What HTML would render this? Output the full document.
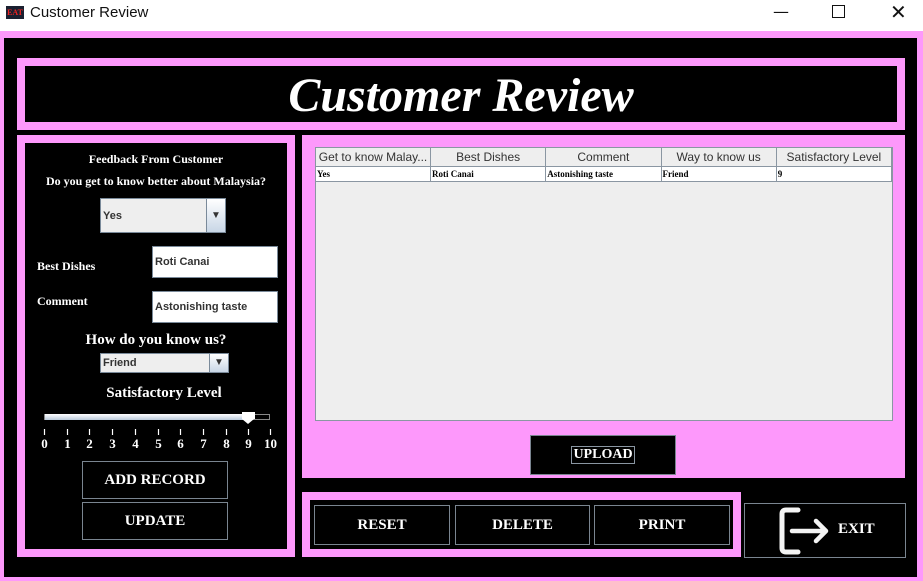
<!DOCTYPE html><html><head><style>
body{margin:0;width:923px;height:581px;position:relative;overflow:hidden;background:#000;font-family:"Liberation Serif",serif}
.a{position:absolute;box-sizing:border-box}
.pk{background:#fd98fb}
.bk{background:#000}
.t{color:#fff;font-weight:bold;font-size:12px;text-align:center}
.btn{border:1px solid #7a8590;color:#fff;font-weight:bold;font-size:15px;display:flex;align-items:center;justify-content:center;background:#000}
.fld{background:#fff;border:1px solid #7a8a9a;font-family:"Liberation Sans",sans-serif;font-weight:bold;font-size:11px;color:#333;padding-left:2px;display:flex;align-items:center}
th,td{border:1px solid #8a96a2;padding:0}
th{font-family:"Liberation Sans",sans-serif;font-weight:normal;font-size:12px;color:#333;background:#eee;height:18px}
td{font-size:9px;font-weight:bold;height:14px;background:#fff;padding-left:1px}
</style></head><body>
<div class="a" style="left:0;top:0;width:923px;height:31px;background:#fff"></div>
<div class="a" style="left:6px;top:6px;width:18px;height:13px;background:#1a2030;color:#e22;font-size:8px;font-weight:bold;line-height:13px;text-align:center">EAT</div>
<div class="a" style="left:30px;top:4px;font-family:'Liberation Sans',sans-serif;font-size:15px;color:#111">Customer Review</div>
<div class="a" style="left:773px;top:2px;font-family:'DejaVu Sans';font-size:16px;color:#111">—</div>
<div class="a" style="left:832px;top:5px;width:13px;height:13px;border:1.5px solid #111"></div>
<div class="a" style="left:890px;top:0px;font-family:'DejaVu Sans';font-size:20px;color:#111">✕</div>
<div class="a pk" style="left:0;top:31px;width:923px;height:550px"></div>
<div class="a bk" style="left:4px;top:38px;width:913px;height:539px"></div>
<div class="a pk" style="left:17px;top:58px;width:888px;height:72px"></div>
<div class="a bk" style="left:25px;top:66px;width:872px;height:56px;color:#fff;font-style:italic;font-weight:bold;font-size:48px;text-align:center;line-height:60px">Customer Review</div>
<div class="a pk" style="left:17px;top:135px;width:278px;height:422px"></div>
<div class="a bk" style="left:25px;top:143px;width:262px;height:406px"></div>
<div class="a t" style="left:25px;top:152px;width:262px">Feedback From Customer</div>
<div class="a t" style="left:25px;top:174px;width:262px">Do you get to know better about Malaysia?</div>
<div class="a fld" style="left:100px;top:198px;width:126px;height:35px;background:#eee">Yes</div>
<div class="a" style="left:206px;top:199px;width:19px;height:33px;background:linear-gradient(#fff,#c8d6e6);border-left:1px solid #7a8a9a;color:#333;font-size:10px;text-align:center;line-height:33px">▼</div>
<div class="a t" style="left:37px;top:259px;text-align:left">Best Dishes</div>
<div class="a fld" style="left:152px;top:246px;width:126px;height:32px">Roti Canai</div>
<div class="a t" style="left:37px;top:294px;text-align:left">Comment</div>
<div class="a fld" style="left:152px;top:291px;width:126px;height:32px">Astonishing taste</div>
<div class="a t" style="left:25px;top:332px;width:262px;font-size:15px">How do you know us?</div>
<div class="a fld" style="left:100px;top:353px;width:129px;height:20px;background:#eee">Friend</div>
<div class="a" style="left:209px;top:354px;width:19px;height:18px;background:linear-gradient(#fff,#c8d6e6);border-left:1px solid #7a8a9a;color:#333;font-size:10px;text-align:center;line-height:18px">▼</div>
<div class="a t" style="left:25px;top:385px;width:278px;font-size:15px">Satisfactory Level</div>
<div class="a" style="left:44px;top:414px;width:226px;height:6px;border:1px solid #888;background:#000"></div>
<div class="a" style="left:45px;top:414px;width:205px;height:6px;background:linear-gradient(#fff,#b8c8da)"></div>
<div class="a" style="left:242px;top:412px;width:13px;height:7px;background:#fff"></div>
<div class="a" style="left:242px;top:419px;width:0;height:0;border-left:6.5px solid transparent;border-right:6.5px solid transparent;border-top:5px solid #fff"></div>
<div class="a" style="left:34px;top:428px;width:246px;height:26px">
<svg width="246" height="26" style="position:absolute;left:0;top:0"><g stroke="#fff" stroke-width="1.2"><line x1="10.5" y1="1" x2="10.5" y2="7"/><line x1="33.5" y1="1" x2="33.5" y2="7"/><line x1="55.5" y1="1" x2="55.5" y2="7"/><line x1="78.5" y1="1" x2="78.5" y2="7"/><line x1="101.5" y1="1" x2="101.5" y2="7"/><line x1="124.5" y1="1" x2="124.5" y2="7"/><line x1="146.5" y1="1" x2="146.5" y2="7"/><line x1="169.5" y1="1" x2="169.5" y2="7"/><line x1="192.5" y1="1" x2="192.5" y2="7"/><line x1="214.5" y1="1" x2="214.5" y2="7"/><line x1="236.5" y1="1" x2="236.5" y2="7"/></g>
<g fill="#fff" font-family="Liberation Serif" font-weight="bold" font-size="13" text-anchor="middle"><text x="10.5" y="20">0</text><text x="33.5" y="20">1</text><text x="55.5" y="20">2</text><text x="78.5" y="20">3</text><text x="101.5" y="20">4</text><text x="124.5" y="20">5</text><text x="146.5" y="20">6</text><text x="169.5" y="20">7</text><text x="192.5" y="20">8</text><text x="214.5" y="20">9</text><text x="236.5" y="20">10</text></g></svg></div>
<div class="a btn" style="left:82px;top:461px;width:146px;height:38px">ADD RECORD</div>
<div class="a btn" style="left:82px;top:502px;width:146px;height:38px">UPDATE</div>
<div class="a pk" style="left:302px;top:135px;width:603px;height:343px"></div>
<div class="a" style="left:315px;top:147px;width:578px;height:274px;background:#eee;border:1px solid #8a96a2"></div>
<table class="a" style="left:315px;top:147px;width:577px;border-collapse:collapse;table-layout:fixed"><tr><th style="width:114px">Get to know Malay...</th><th>Best Dishes</th><th>Comment</th><th>Way to know us</th><th>Satisfactory Level</th></tr>
<tr><td>Yes</td><td>Roti Canai</td><td>Astonishing taste</td><td>Friend</td><td>9</td></tr></table>
<div class="a btn" style="left:530px;top:435px;width:146px;height:40px"><span style="border:1px solid #8a96a2;padding:0 1px;font-size:14px">UPLOAD</span></div>
<div class="a pk" style="left:302px;top:492px;width:439px;height:65px"></div>
<div class="a bk" style="left:310px;top:500px;width:423px;height:49px"></div>
<div class="a btn" style="left:314px;top:505px;width:136px;height:40px">RESET</div>
<div class="a btn" style="left:455px;top:505px;width:135px;height:40px">DELETE</div>
<div class="a btn" style="left:594px;top:505px;width:136px;height:40px">PRINT</div>
<div class="a btn" style="left:744px;top:503px;width:162px;height:55px"></div>
<svg class="a" style="left:776px;top:506px" width="60" height="50"><path d="M22 4H10Q6 4 6 8V42Q6 46 10 46H22" fill="none" stroke="#f4f4f4" stroke-width="5" stroke-linecap="round"/><path d="M16 25H50M40 15L50 25L40 35" fill="none" stroke="#f4f4f4" stroke-width="4.5" stroke-linecap="round" stroke-linejoin="round"/></svg>
<div class="a t" style="left:838px;top:521px;font-size:15px">EXIT</div>
</body></html>
